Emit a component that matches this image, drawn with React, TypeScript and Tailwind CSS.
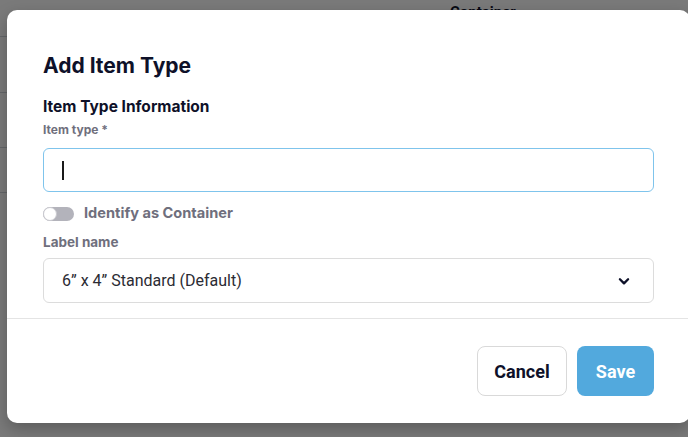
import React from 'react';

// Fenetre "Add Item Type" posee sur la page, derriere un voile gris

const INTER = { fontFamily: 'Inter, "Noto Sans", sans-serif' };

function Toggle({ on = false }: { on?: boolean }) {
  return (
    <span
      className={`relative inline-flex h-[14px] w-[31px] shrink-0 items-center rounded-full ${
        on ? 'bg-[#52a9dd]' : 'bg-[#b3b3bb]'
      }`}
    >
      <span
        className={`h-[14px] w-[14px] rounded-full border border-[#c9c9cf] bg-white ${on ? 'ml-auto' : ''}`}
      />
    </span>
  );
}

function ChevronDown() {
  return (
    <svg className="h-[14px] w-[14px]" viewBox="0 0 24 24" fill="none" stroke="#0e1129" strokeWidth={4} strokeLinecap="round" strokeLinejoin="round">
      <path d="M5 9l7 7 7-7" />
    </svg>
  );
}

function BackgroundPage() {
  // page visible sous le voile
  return (
    <div className="flex h-full w-full flex-col bg-white">
      <div className="h-[37px] border-b border-gray-300 pl-[450px] pt-[1px] text-[15px] font-bold text-[#0e1129]">
        Container
      </div>
      <div className="h-[56px] border-b border-gray-300" />
      <div className="h-[55px] border-b border-gray-300" />
      <div className="h-[45px] border-b border-gray-300" />
    </div>
  );
}

export default function App() {
  return (
    <div
      className="relative h-[437px] w-[688px] overflow-hidden"
      style={{ fontFamily: 'Roboto, "Liberation Sans", Arial, sans-serif' }}
    >
      <BackgroundPage />
      <div className="absolute inset-0 bg-black/[0.52]" />

      {/* Modal */}
      <div className="absolute left-[7px] top-[10px] flex h-[413px] w-[683px] flex-col rounded-[10px] bg-white shadow-[0_6px_16px_rgba(0,0,0,0.25)]">
        <div className="flex flex-col px-[36px] pt-[42px] pb-[15px]">
          <h2 style={INTER} className="text-[21px] font-bold leading-[28px] text-[#0e1129]">
            Add Item Type
          </h2>

          <h3 style={INTER} className="mt-[17px] text-[15.5px] font-bold leading-[20px] text-[#0e1129]">
            Item Type Information
          </h3>

          <label style={INTER} className="mt-[5px] text-[12px] font-bold leading-[16px] text-[#6f6f7d]">
            Item type *
          </label>
          <div className="mt-[10px] flex h-[44px] items-center rounded-[6px] border border-[#7fc4ec] px-[18px]">
            <span className="h-[19px] w-[2px] bg-[#1a1a1a]" />
          </div>

          <div className="mt-[12px] flex h-[20px] items-center gap-[10px]">
            <Toggle />
            <span style={INTER} className="text-[14.6px] font-bold text-[#6f6f7d]">
              Identify as Container
            </span>
          </div>

          <label style={INTER} className="mt-[10px] text-[13.5px] font-bold leading-[16px] text-[#6f6f7d]">
            Label name
          </label>
          <div className="mt-[8px] flex h-[45px] items-center justify-between rounded-[6px] border border-[#dcdcdc] pl-[18px] pr-[22px]">
            <span className="text-[16px] text-[#2b2b33]">6” x 4” Standard (Default)</span>
            <ChevronDown />
          </div>
        </div>

        <div className="border-t border-[#e4e4e4]" />

        <div className="flex justify-end gap-[10px] px-[36px] pt-[27px]">
          <button className="h-[50px] w-[90px] rounded-[8px] border border-[#d9d9d9] bg-white text-[18px] font-bold text-[#0e1129]">
            Cancel
          </button>
          <button className="h-[50px] w-[77px] rounded-[8px] bg-[#52a9dd] text-[18px] font-bold text-white">
            Save
          </button>
        </div>
      </div>
    </div>
  );
}
